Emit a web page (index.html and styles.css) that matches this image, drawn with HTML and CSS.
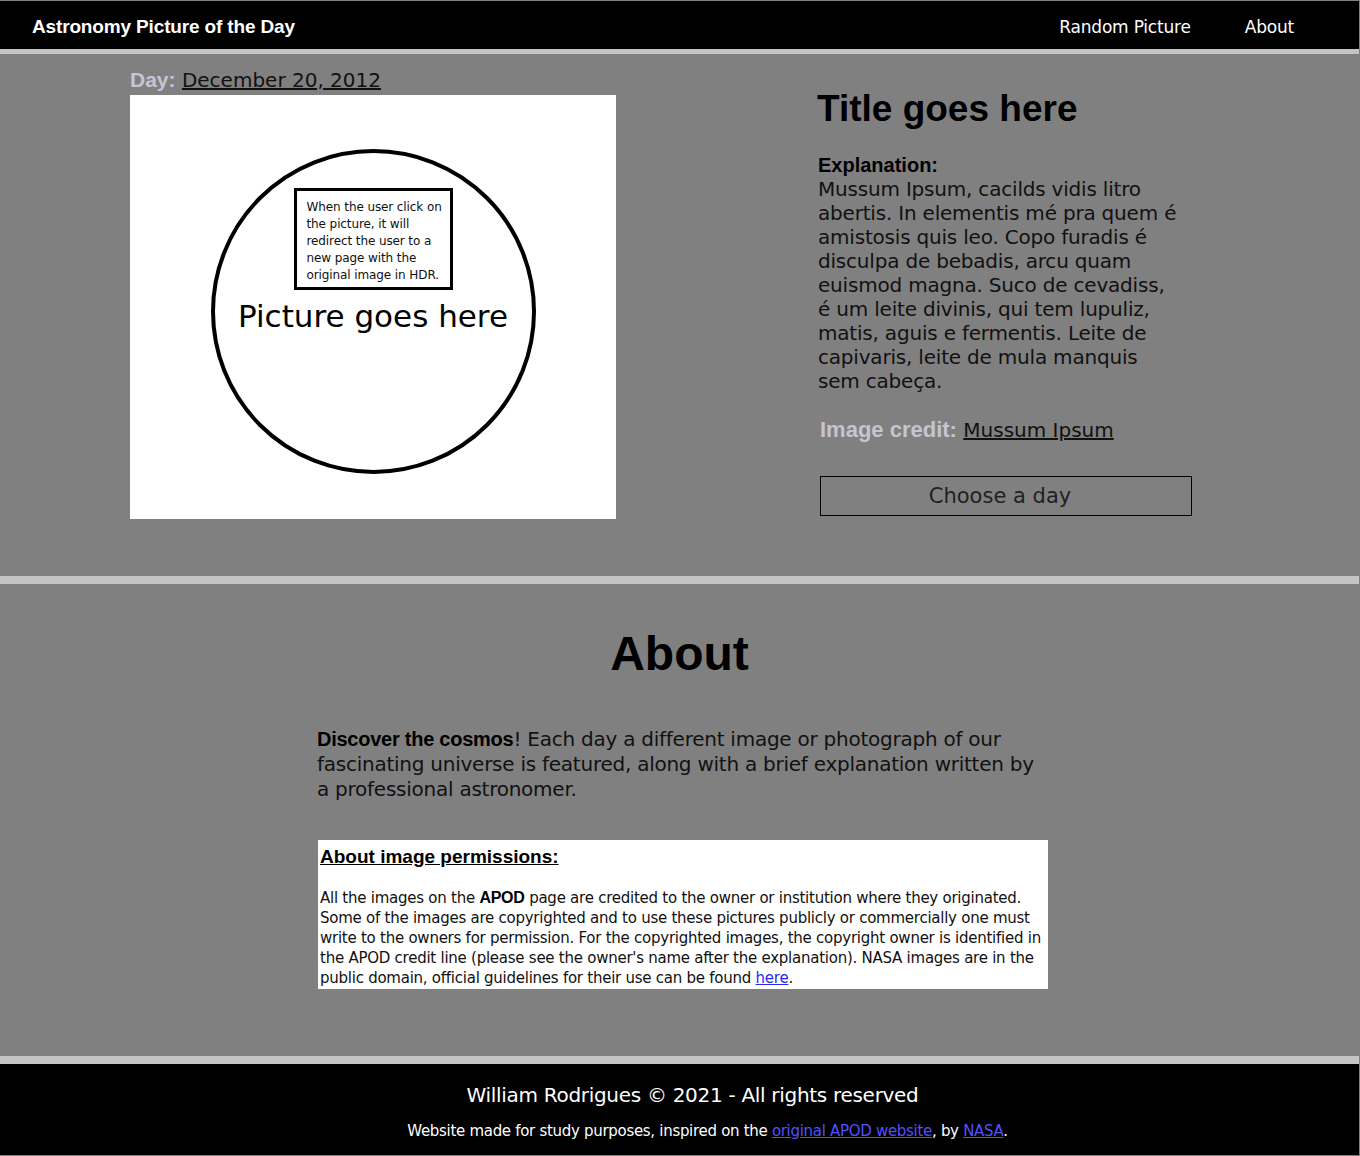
FILE: index.html
```html
<!DOCTYPE html>
<html lang="en">
<head>
<meta charset="utf-8">
<title>Astronomy Picture of the Day</title>
<link rel="stylesheet" href="styles.css">
</head>
<body>
<header class="topbar">
  <div class="brand">Astronomy Picture of the Day</div>
  <nav class="nav">
    <a class="nav-link" href="#">Random Picture</a>
    <a class="nav-link" href="#about">About</a>
  </nav>
</header>

<main class="apod">
  <section class="apod-left">
    <div class="day"><span class="label">Day:</span> <a class="dark-link" href="#">December 20, 2012</a></div>
    <div class="picture">
      <div class="circle">
        <div class="note">When the user click on the picture, it will redirect the user to a new page with the original image in HDR.</div>
        <div class="placeholder">Picture goes here</div>
      </div>
    </div>
  </section>
  <section class="apod-right">
    <h1 class="title">Title goes here</h1>
    <div class="expl-label">Explanation:</div>
    <p class="expl">Mussum Ipsum, cacilds vidis litro abertis. In elementis mé pra quem é amistosis quis leo. Copo furadis é disculpa de bebadis, arcu quam euismod magna. Suco de cevadiss, é um leite divinis, qui tem lupuliz, matis, aguis e fermentis. Leite de capivaris, leite de mula manquis sem cabeça.</p>
    <div class="credit"><span class="label credit-label">Image credit:</span> <a class="dark-link" href="#">Mussum Ipsum</a></div>
    <button class="choose">Choose a day</button>
  </section>
</main>

<section class="about" id="about">
  <h2 class="about-title">About</h2>
  <div class="about-body">
    <p class="about-text"><b class="bold">Discover the cosmos</b>! Each day a different image or photograph of our fascinating universe is featured, along with a brief explanation written by a professional astronomer.</p>
    <div class="perm">
      <h3 class="perm-title">About image permissions:</h3>
      <p class="perm-text">All the images on the <b class="bold">APOD</b> page are credited to the owner or institution where they originated. Some of the images are copyrighted and to use these pictures publicly or commercially one must write to the owners for permission. For the copyrighted images, the copyright owner is identified in the APOD credit line (please see the owner's name after the explanation). NASA images are in the public domain, official guidelines for their use can be found <a class="blue-link" href="#">here</a>.</p>
    </div>
  </div>
</section>

<footer class="footer">
  <div class="copy">William Rodrigues © 2021 - All rights reserved</div>
  <div class="made">Website made for study purposes, inspired on the <a class="foot-link" href="#">original APOD website</a>, by <a class="foot-link" href="#">NASA</a>.</div>
</footer>
</body>
</html>
```

FILE: styles.css
```css
* { box-sizing: border-box; }

html, body {
  margin: 0;
  background: #808080;
}

body {
  padding: 1px 1px 2px 0;
  font-family: "DejaVu Sans", sans-serif;
  color: #111;
}

.topbar {
  height: 53px;
  background: #000;
  border-bottom: 5px solid #c4c4c4;
  display: flex;
  align-items: center;
  justify-content: space-between;
  padding: 3px 65px 0 32px;
}

.brand {
  font-family: "Liberation Sans", Arial, sans-serif;
  font-weight: bold;
  font-size: 19px;
  letter-spacing: -0.15px;
  color: #fff;
}

.nav {
  display: flex;
  gap: 54px;
}

.nav-link {
  color: #fff;
  text-decoration: none;
  font-size: 17px;
  letter-spacing: -0.2px;
}

.apod {
  display: flex;
  align-items: flex-start;
  gap: 202px;
  padding: 14px 0 57px 130px;
  border-bottom: 8px solid #c4c4c4;
}

.apod-left {
  width: 486px;
}

.day {
  font-size: 20px;
  line-height: 24px;
  margin-bottom: 3px;
}

.label {
  font-family: "Liberation Sans", Arial, sans-serif;
  font-weight: bold;
  color: #c4c4d2;
  font-size: 21px;
}

.credit-label {
  font-size: 22px;
}

.dark-link {
  color: #111;
  text-decoration: underline;
}

.picture {
  width: 486px;
  height: 424px;
  background: #fff;
  display: flex;
  justify-content: center;
  padding-top: 54px;
}

.circle {
  width: 325px;
  height: 325px;
  border: 4px solid #000;
  border-radius: 50%;
  display: flex;
  flex-direction: column;
  align-items: center;
  padding-top: 35px;
}

.note {
  width: 159px;
  border: 3px solid #000;
  padding: 8px 2px 3px 10px;
  font-size: 12px;
  line-height: 17px;
  letter-spacing: -0.1px;
  color: #111;
}

.placeholder {
  margin-top: 8px;
  font-size: 31px;
  line-height: 36px;
  color: #000;
}

.apod-right {
  width: 376px;
  margin-top: 20px;
}

.title {
  margin: 0;
  font-family: "Liberation Sans", Arial, sans-serif;
  font-weight: bold;
  font-size: 37px;
  line-height: 42px;
  color: #000;
  margin-left: -1px;
}

.expl-label {
  margin-top: 23px;
  font-family: "Liberation Sans", Arial, sans-serif;
  font-weight: bold;
  font-size: 20px;
  line-height: 24px;
  color: #000;
}

.expl {
  margin: 0;
  width: 362px;
  font-size: 20px;
  line-height: 24px;
  letter-spacing: -0.2px;
  color: #111;
}

.credit {
  margin-top: 25px;
  font-size: 20px;
  line-height: 24px;
  padding-left: 2px;
}

.choose {
  display: block;
  margin: 34px 0 0 2px;
  width: 372px;
  height: 40px;
  background: transparent;
  border: 1px solid #000;
  font-family: "DejaVu Sans", sans-serif;
  font-size: 21px;
  color: #222;
  padding: 0 12px 0 0;
}

.about {
  padding: 42px 0 67px;
  border-bottom: 8px solid #c4c4c4;
}

.about-title {
  margin: 0;
  text-align: center;
  font-family: "Liberation Sans", Arial, sans-serif;
  font-weight: bold;
  font-size: 48px;
  line-height: 55px;
  color: #000;
}

.about-body {
  width: 735px;
  margin-left: 317px;
}

.about-text {
  margin: 46px 0 0;
  width: 725px;
  font-size: 20px;
  line-height: 25px;
  letter-spacing: -0.25px;
  color: #111;
}

.bold {
  font-family: "Liberation Sans", Arial, sans-serif;
  font-weight: bold;
  color: #000;
}

.perm {
  width: 730px;
  margin: 38px 0 0 1px;
  background: #fff;
  padding: 6px 2px 1px 2px;
}

.perm-title {
  margin: 0;
  font-family: "Liberation Sans", Arial, sans-serif;
  font-weight: bold;
  font-size: 19px;
  line-height: 22px;
  text-decoration: underline;
  color: #000;
}

.perm-text {
  margin: 20px 0 0;
  font-size: 15px;
  line-height: 20px;
  letter-spacing: -0.25px;
  color: #111;
}

.perm-text .bold {
  font-size: 16px;
}

.blue-link {
  color: #2a2aee;
}

.footer {
  background: #000;
  color: #fff;
  text-align: center;
  padding: 19px 0 15px;
}

.copy {
  font-size: 20px;
  line-height: 24px;
  letter-spacing: -0.3px;
  padding-left: 26px;
}

.made {
  margin-top: 15px;
  font-size: 15px;
  line-height: 18px;
  letter-spacing: -0.3px;
  padding-left: 56px;
}

.foot-link {
  color: #5252ff;
}
```
